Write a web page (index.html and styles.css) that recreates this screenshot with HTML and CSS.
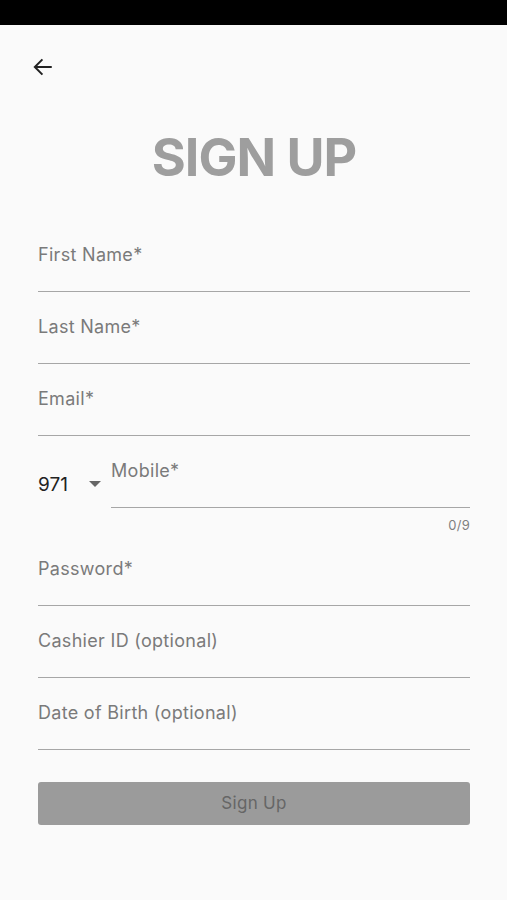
FILE: index.html
```html
<html>
  <head>
    <meta charset="utf-8" />
    <title>Sign Up</title>
    <link rel="stylesheet" href="styles.css">
  </head>
  <body>
    <div class="statusbar"></div>
    <div class="page">
      <div class="topbar">
        <svg class="back" width="28" height="28" viewBox="0 0 24 24">
          <path d="M19.5 12H5 M11.5 5.5L5 12l6.5 6.5" fill="none" stroke="#222" stroke-width="1.7" />
        </svg>
      </div>
      <h1 class="title">SIGN UP</h1>

      <div class="form">
        <div class="field"><span class="label">First Name*</span></div>
        <div class="field"><span class="label">Last Name*</span></div>
        <div class="field"><span class="label">Email*</span></div>

        <div class="phone">
          <div class="code">
            <span>971</span>
            <span class="caret"></span>
          </div>
          <div class="field mobile"><span class="label">Mobile*</span></div>
        </div>
        <div class="counter">0/9</div>

        <div class="field"><span class="label">Password*</span></div>
        <div class="field"><span class="label">Cashier ID (optional)</span></div>
        <div class="field"><span class="label">Date of Birth (optional)</span></div>

        <div class="button">Sign Up</div>
      </div>
    </div>
  </body>
</html>
```

FILE: styles.css
```css
body {
  margin: 0;
  background-color: #fafafa;
  font-family: Inter, "Liberation Sans", sans-serif;
}

.statusbar {
  height: 25px;
  background-color: #000;
}

.page {
  padding: 0 37px 0 38px;
}

.topbar {
  height: 56px;
  padding-top: 28px;
  margin-left: -9px;
}

.back {
  display: block;
}

.title {
  margin: 0;
  text-align: center;
  font-weight: 700;
  font-size: 52px;
  line-height: 60px;
  color: #9e9e9e;
  letter-spacing: -1px;
  padding-top: 19px;
  height: 92px;
}

.field {
  height: 46px;
  padding-top: 25px;
  border-bottom: 1.5px solid #a6a6a6;
}

.label {
  display: block;
  font-size: 18px;
  line-height: 20px;
  letter-spacing: 0.3px;
  color: #7a7a7a;
}

.phone {
  display: flex;
  align-items: flex-end;
}

.code {
  width: 73px;
  display: flex;
  align-items: center;
  font-size: 19px;
  color: #222;
  height: 46px;
  margin-bottom: 1px;
}

.caret {
  margin-left: 21px;
  border-left: 6px solid transparent;
  border-right: 6px solid transparent;
  border-top: 6px solid #666;
}

.mobile {
  flex: 1;
}

.counter {
  text-align: right;
  font-size: 13px;
  line-height: 14px;
  letter-spacing: 0.3px;
  color: #808080;
  padding-top: 10px;
  height: 16px;
}

.button {
  margin-top: 32px;
  height: 43px;
  line-height: 43px;
  background-color: #9b9b9b;
  border-radius: 3px;
  text-align: center;
  font-size: 17px;
  letter-spacing: 0.3px;
  color: #666;
}
```
